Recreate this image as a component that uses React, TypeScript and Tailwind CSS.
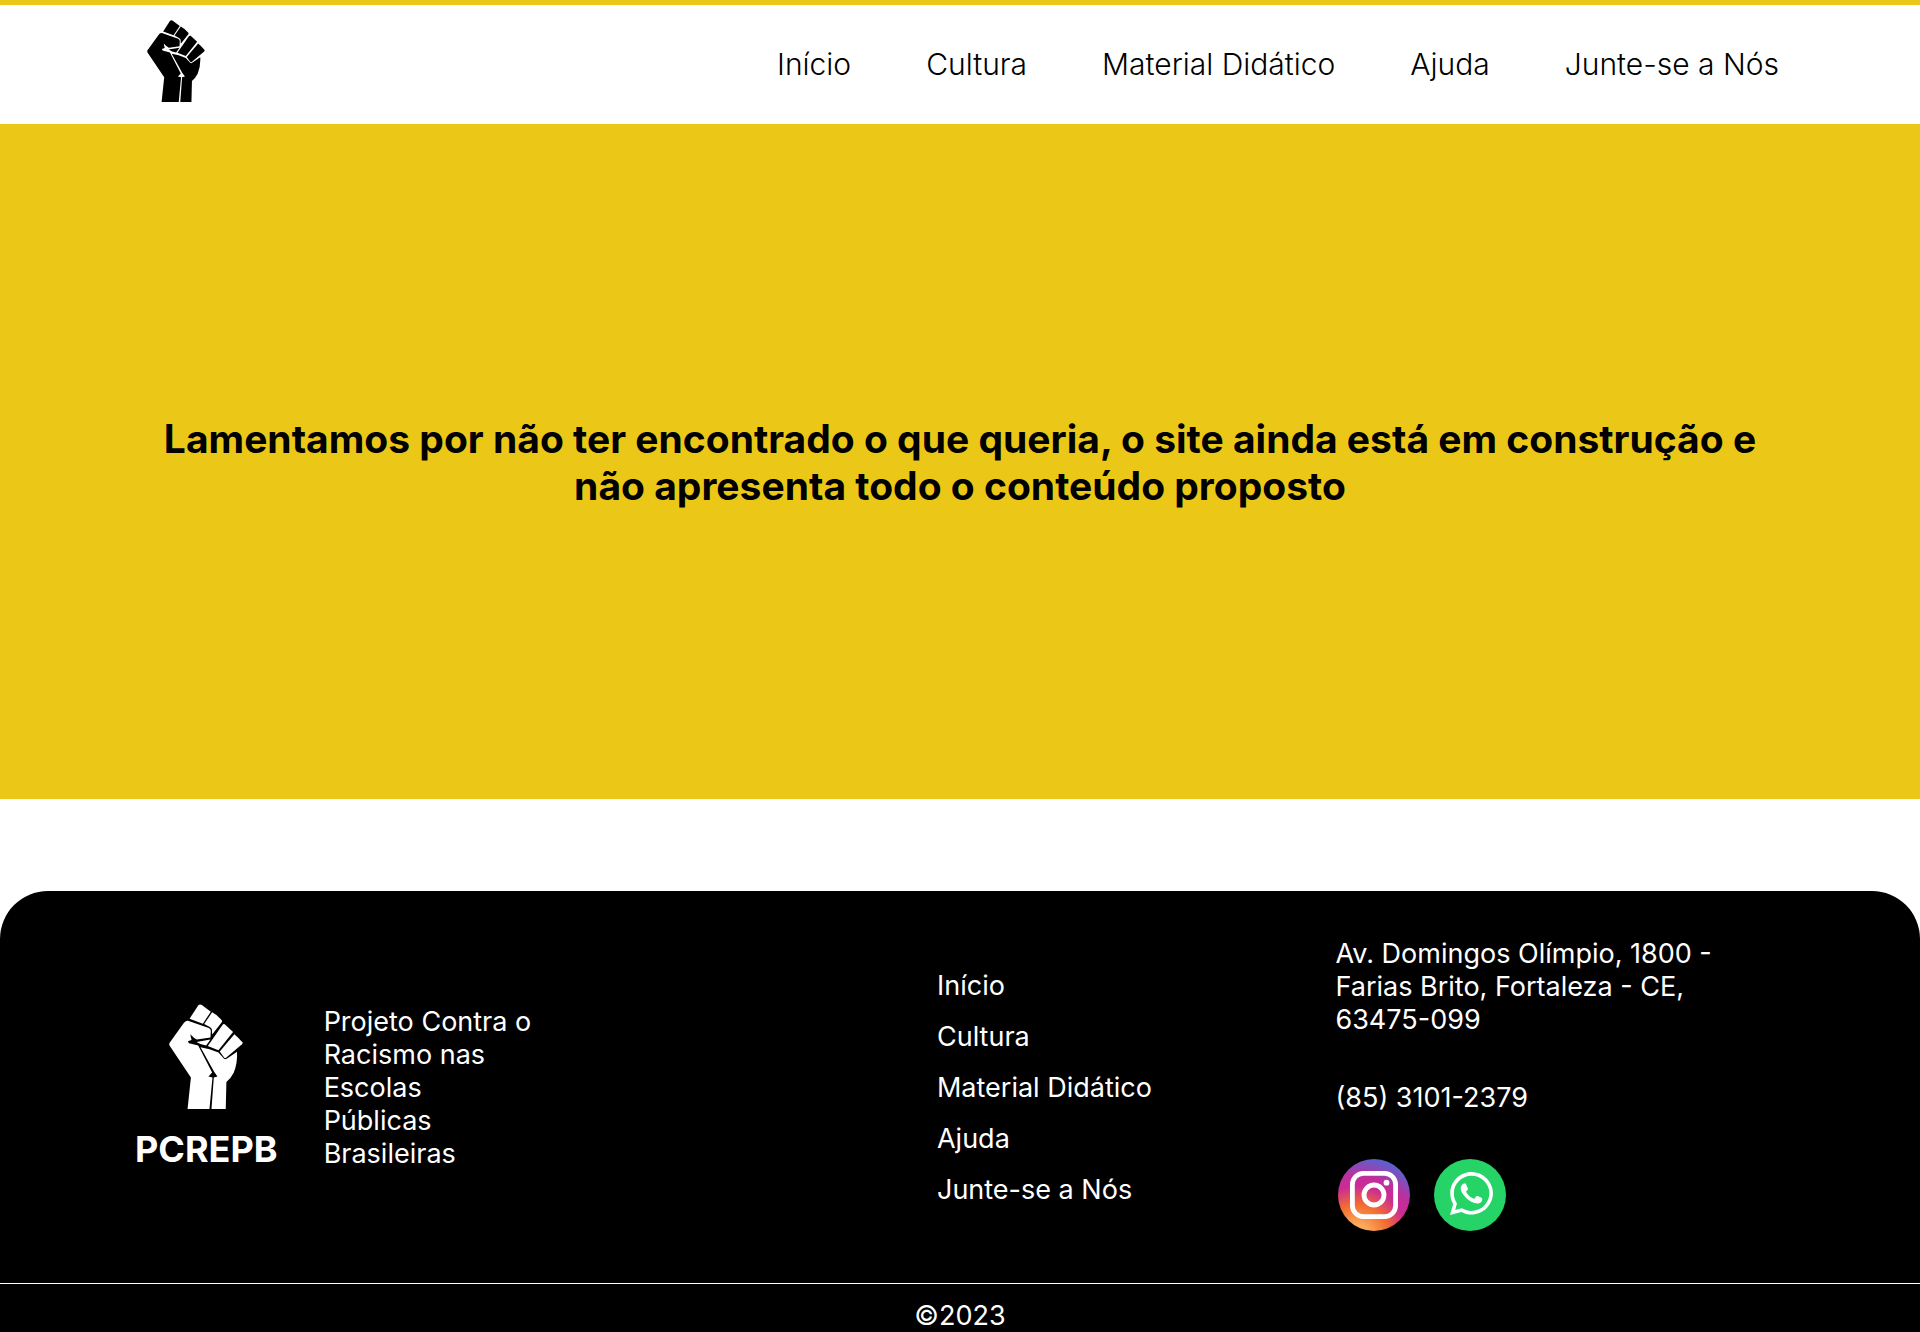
import { FaWhatsapp } from "react-icons/fa";

const links = ["Início", "Cultura", "Material Didático", "Ajuda", "Junte-se a Nós"];

function Fist({ className }: { className: string }) {
  return (
    <svg viewBox="28 26 223 316" className={className} fill="currentColor" aria-hidden="true">
      <path d="M90 70 L116 30 Q121 25 127 29 L154 49 L130 85 Z" />
      <path d="M134 86 L158 51 Q173 59 187 75 Q189 78 187 81 L158 118 L157 101 Q155 98 151 95 Z" />
      <path d="M145 152 L189 89 Q192 85 196 87 L221 110 L177 165 Z" />
      <path d="M181 169 L225 117 Q238 128 249 141 Q251 144 248 147 L200 188 Q197 190 194 187 Z" />
      <path d="M29 144 L72 84 Q77 75 85 76 L148 98 Q154 101 154 107 L153 127 L112 133 Q103 129 92 117 L96 134 L85 138 L88 144 L116 151 L158 232 L147 244 L159 247 L150 342 L84 342 L94 247 L29 150 Z" />
      <path d="M111 140 L153 133 L140 151 Q124 149 111 140 Z" />
      <path d="M123 156 Q150 160 177 172 L194 191 Q198 194 203 190 L233 170 Q235 204 223 233 Q215 249 201 261 L199 342 L156 342 L163 247 L174 244 L164 230 Z" />
    </svg>
  );
}

function InstagramLogo() {
  return (
    <svg viewBox="0 0 72 72" className="size-18" aria-hidden="true">
      <defs>
        <radialGradient id="instagram-fill" cx="0.27" cy="1.07" r="1.15">
          <stop offset="0" stopColor="#ffc870" />
          <stop offset="0.18" stopColor="#f9a055" />
          <stop offset="0.38" stopColor="#f36c30" />
          <stop offset="0.6" stopColor="#cb2c93" />
          <stop offset="0.72" stopColor="#c12d9b" />
          <stop offset="0.97" stopColor="#5365d2" />
        </radialGradient>
      </defs>
      <circle cx="36" cy="36" r="36" fill="url(#instagram-fill)" />
      <rect x="14.4" y="14.4" width="43.2" height="43.2" rx="11" fill="none" stroke="#fff" strokeWidth="4.8" />
      <circle cx="36" cy="36" r="10" fill="none" stroke="#fff" strokeWidth="4.8" />
      <circle cx="48.5" cy="23.7" r="2.9" fill="#fff" />
    </svg>
  );
}

export default function App() {
  return (
    <div className="bg-white font-[Inter,sans-serif] text-black">
      <header className="flex h-31 items-center justify-between border-t-5 border-[#ebc817] pr-[141px] pl-[147px]">
        <a href="#inicio" aria-label="PCREPB" className="pb-2">
          <Fist className="h-[82px] w-[58px]" />
        </a>
        <nav className="flex gap-[75px] text-[30px] font-light">
          {links.map((l) => (
            <a key={l} href="#">{l}</a>
          ))}
        </nav>
      </header>
      <main className="flex h-[675px] items-center justify-center bg-[#ebc817] px-[140px]">
        <h1 className="text-center text-[39px] leading-[47px] font-bold">
          Lamentamos por não ter encontrado o que queria, o site ainda está em construção e não apresenta todo o conteúdo proposto
        </h1>
      </main>
      <footer className="mt-[92px] rounded-t-[48px] bg-black text-[27px] leading-[33px] text-white">
        <div className="grid grid-cols-[801fr_398fr_449fr] items-center px-[135px] pt-[46px] pb-[46px]">
          <div className="flex items-center gap-[46px]">
            <div className="flex flex-col items-center gap-5 pb-0.5">
              <Fist className="h-[105px] w-[74px]" />
              <strong className="text-4xl font-bold">PCREPB</strong>
            </div>
            <p>
              Projeto Contra o<br />Racismo nas<br />Escolas<br />Públicas<br />Brasileiras
            </p>
          </div>
          <ul className="flex flex-col gap-[18px]">
            {links.map((l) => (
              <li key={l}><a href="#">{l}</a></li>
            ))}
          </ul>
          <address className="max-w-[400px] pb-1.5 not-italic">
            <p>Av. Domingos Olímpio, 1800 - Farias Brito, Fortaleza - CE, 63475-099</p>
            <p className="mt-[45px]">(85) 3101-2379</p>
            <div className="mt-[45px] flex gap-6 pl-[3px]">
              <a href="#instagram" aria-label="Instagram"><InstagramLogo /></a>
              <a href="#whatsapp" aria-label="WhatsApp" className="flex size-18 items-center justify-center rounded-full bg-[#25d366] pb-[3px] pl-0.5">
                <FaWhatsapp className="size-[49px]" />
              </a>
            </div>
          </address>
        </div>
        <p className="border-t border-white pt-4 text-center leading-8">©2023</p>
      </footer>
    </div>
  );
}
